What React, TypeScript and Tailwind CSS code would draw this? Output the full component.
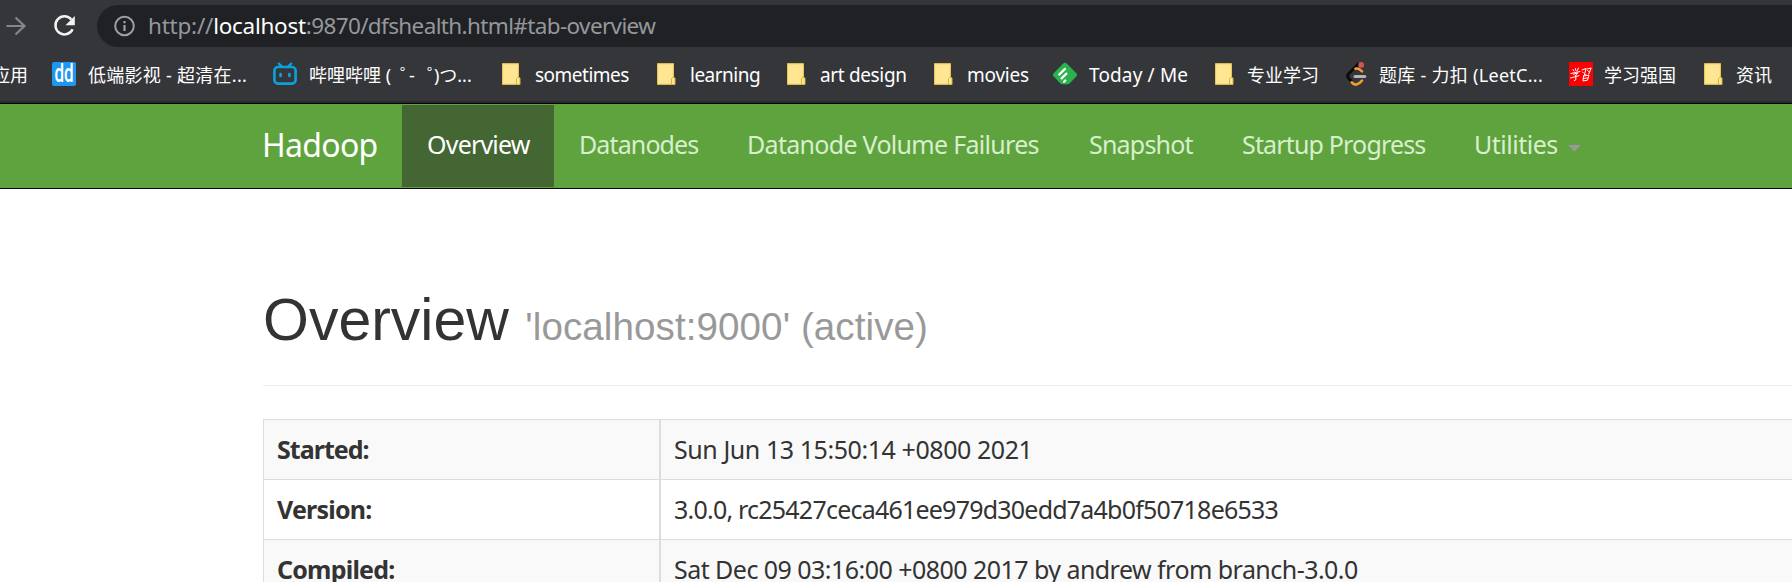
import type { ReactNode } from 'react';

const Folder = () => (
  <svg viewBox="0 0 24 24" className="h-6 w-6">
    <rect x="3" y="1" width="17" height="22" fill="#a08a3a" />
    <rect x="3.6" y="1.8" width="15.8" height="20.4" fill="#ffe693" />
    <path d="M3.6 1.8h15.8v20.4H3.6z" fill="none" stroke="#e8c95a" strokeWidth="1" />
    <path d="M17.5 22.5v-6l1.5-1.3 2 .8v6.5z" fill="#ffe693" stroke="#d9b340" strokeWidth="1" />
  </svg>
);

const Didi = () => (
  <span className="flex h-6 w-6 items-center justify-center rounded-[2px] bg-[#1e97ee] font-['Roboto',sans-serif] text-[25px] leading-6 text-white">
    <span className="scale-x-[0.68] font-medium">dd</span>
  </span>
);

const Bili = () => (
  <svg viewBox="0 0 24 24" className="h-6 w-6" fill="none" stroke="#0ba2dc" strokeWidth="2.6" strokeLinecap="round">
    <path d="M5.8 1.6 9 4.6M18.2 1.6 15 4.6" strokeWidth="2.2" />
    <rect x="1.4" y="5" width="21.2" height="16.6" rx="3.6" />
    <path d="M7.6 12v2M16.4 12v2" />
  </svg>
);

const Feedly = () => (
  <svg viewBox="0 0 24 24" className="h-6 w-6">
    <path d="M10 1.800a2.800 2.800 0 0 1 4 0l9.300 9.500a2.300 2.300 0 0 1 0 3.200L16.600 21.600a2.500 2.500 0 0 1-1.700.7H9.100a2.500 2.500 0 0 1-1.700-.7L.7 14.500a2.300 2.300 0 0 1 0-3.200z" fill="#2bb24c" />
    <path d="M6.200 12.600 12 6.900M8.600 16.400 13.400 11.600M11 19.800l1.300-1.300" stroke="#fff" strokeWidth="2.200" strokeLinecap="round" />
  </svg>
);

const Leet = () => (
  <svg viewBox="0 0 24 24" className="h-6 w-6" fill="none" strokeLinecap="round" strokeWidth="3">
    <path d="M7.500 19.200 4.600 16.200a3.200 3.200 0 0 1 0-4.400L14 2.400" stroke="#0c0c0c" />
    <path d="M11.500 6.700c2.300-.7 4.300.5 6.500 2.700M7.800 20.300c2.300 3.600 6.800 3 10.200-1.700" stroke="#f0a02f" strokeWidth="2.600" />
    <path d="M11 14.600h9.800" stroke="#b5b5b5" />
    <circle cx="17.200" cy="2.900" r="2.900" fill="#d05451" />
  </svg>
);

const Xuexi = () => (
  <svg viewBox="0 0 24 24" className="h-6 w-6">
    <rect width="24" height="24" fill="#fb0000" />
    <g fill="none" stroke="#fff" strokeWidth="1" strokeLinecap="round">
      <path d="M4 7.500 5 9M6.500 6.500l.3 2M9.500 6 8 9M2 11.500l9-2M4.500 12.300l4.500-1.500-2.500 2.700M1.500 16l8.500-2.300M6.800 13.500v4.300l-1.500.7" />
      <path d="M13 8l4-1.500-1.500 6M13.500 10l1 1M18 7l4.200-1-2.500 6M18.500 8.500l1 1M17 12.500l-2 1M14.500 14l-.5 5 4.500-.8 1.500-5-5.500.8M14.500 16.500l4.300-.6" />
    </g>
  </svg>
);

const biliLabel = (
  <>
    哔哩哔哩{' '}(
    <span className="ml-[9px] inline-block w-[9px]">゜</span>-
    <span className="ml-[12px] inline-block w-[7px]">゜</span>)つ...
  </>
);

const bookmarks: { id: string; icon: ReactNode; label: ReactNode; width: string; text: string }[] = [
  { id: 'ddys', icon: <Didi />, label: '低端影视 - 超清在...', width: 'w-[221px]', text: 'text-[18px] tracking-[0.27px]' },
  { id: 'bilibili', icon: <Bili />, label: biliLabel, width: 'w-[226px]', text: 'text-[18px]' },
  { id: 'sometimes', icon: <Folder />, label: 'sometimes', width: 'w-[155px]', text: 'text-[19px] tracking-[-0.5px]' },
  { id: 'learning', icon: <Folder />, label: 'learning', width: 'w-[130px]', text: 'text-[19px] tracking-[-0.5px]' },
  { id: 'art', icon: <Folder />, label: 'art design', width: 'w-[147px]', text: 'text-[19px] tracking-[-0.35px]' },
  { id: 'movies', icon: <Folder />, label: 'movies', width: 'w-[122px]', text: 'text-[19px] tracking-[-0.25px]' },
  { id: 'feedly', icon: <Feedly />, label: 'Today / Me', width: 'w-[159px]', text: 'text-[19px] tracking-[0.15px]' },
  { id: 'major', icon: <Folder />, label: '专业学习', width: 'w-[132px]', text: 'text-[18px] -ml-px' },
  { id: 'leetcode', icon: <Leet />, label: '题库 - 力扣 (LeetC...', width: 'w-[225px]', text: 'text-[18px] -ml-px tracking-[0.28px]' },
  { id: 'xuexi', icon: <Xuexi />, label: '学习强国', width: 'w-[132px]', text: 'text-[18px] -ml-px' },
  { id: 'news', icon: <Folder />, label: '资讯', width: 'w-[91px]', text: 'text-[18px] -ml-px' },
];

const tabs = [
  { label: 'Overview', style: 'w-[152px] bg-[#446633] text-white tracking-[-0.8px]' },
  { label: 'Datanodes', style: 'w-[168px] text-[#d8efcd] tracking-[-0.88px]' },
  { label: 'Datanode Volume Failures', style: 'w-[342px] text-[#d8efcd] tracking-[-0.7px]' },
  { label: 'Snapshot', style: 'w-[153px] text-[#d8efcd] tracking-[-0.8px]' },
  { label: 'Startup Progress', style: 'w-[232px] text-[#d8efcd] tracking-[-0.83px]' },
];

const rows = [
  { name: 'Started:', nameStyle: 'tracking-[-0.97px]', value: 'Sun Jun 13 15:50:14 +0800 2021', valueStyle: 'tracking-[-0.43px]' },
  { name: 'Version:', nameStyle: 'tracking-[-0.78px]', value: '3.0.0, rc25427ceca461ee979d30edd7a4b0f50718e6533', valueStyle: 'tracking-[-0.78px]' },
  { name: 'Compiled:', nameStyle: 'tracking-[-0.78px]', value: 'Sat Dec 09 03:16:00 +0800 2017 by andrew from branch-3.0.0', valueStyle: 'tracking-[-0.54px]' },
];

function BrowserBar() {
  return (
    <header className="h-[104px] border-b border-black bg-[#35363a]">
      <div className="flex h-[47px] items-end">
        <div className="flex h-[42px] w-[97px] shrink-0 items-center">
          <svg viewBox="0 0 24 24" className="ml-1 h-6 w-6" fill="none" stroke="#85868a" strokeWidth="2.200">
            <path d="M2.500 12H20.500M11.500 3.500 20.500 12l-9 8.500" />
          </svg>
          <svg viewBox="0 0 24 24" className="ml-6 h-6 w-6">
            <path d="M19.300 5.500A9 9 0 1 0 20.600 15.200" fill="none" stroke="#f1f3f4" strokeWidth="2.500" />
            <path d="M22.800 2v9.300h-9.300z" fill="#f1f3f4" />
          </svg>
        </div>
        <div className="flex h-[42px] flex-1 items-center rounded-l-full bg-[#202124] pl-4">
          <svg viewBox="0 0 24 24" className="h-6 w-6 shrink-0" fill="none" stroke="#9aa0a6" strokeWidth="2">
            <circle cx="11.500" cy="12" r="9.300" />
            <path d="M11.500 11v6M11.500 7v2.200" strokeWidth="2.200" />
          </svg>
          <div className="ml-[11px] whitespace-nowrap text-[22.5px] leading-[42px] text-[#94989d]">
            <span className="tracking-[-0.22px]">http://</span>
            <span className="tracking-[-0.28px] text-white">localhost</span>
            <span className="tracking-[-0.63px]">:9870/dfshealth.html#tab-overview</span>
          </div>
        </div>
      </div>
      <nav className="flex h-[54px] items-center overflow-hidden whitespace-nowrap text-[18px] text-white">
        <span className="-ml-2 w-[60px] shrink-0 pt-0.5">应用</span>
        {bookmarks.map((b) => (
          <div key={b.id} className={`flex shrink-0 items-center ${b.width}`}>
            {b.icon}
            <div className="pl-3 pt-[2px]">
              <div className={b.text}>{b.label}</div>
            </div>
          </div>
        ))}
      </nav>
      <div className="h-[2px] bg-[#292a2d]" />
    </header>
  );
}

export default function App() {
  return (
    <div className="h-[582px] w-[1792px] overflow-hidden bg-white font-['Noto_Sans','Noto_Sans_CJK_SC',sans-serif] text-[#333333]">
      <BrowserBar />
      <nav className="flex h-[85px] whitespace-nowrap border-b border-[#080808] bg-[#5fa33e] py-px pl-[262px] text-[25px] leading-[79px]">
        <a className="w-[140px] text-[32px] tracking-[-0.7px] text-white">Hadoop</a>
        {tabs.map((t) => (
          <a key={t.label} className={`pl-[25px] ${t.style}`}>{t.label}</a>
        ))}
        <a className="flex pl-[25px] text-[#d8efcd]">
          <span className="tracking-[-0.5px]">Utilities</span>
          <svg viewBox="0 0 13 7" className="ml-[10px] mt-10 h-[7px] w-[13px]">
            <path d="M0 0h13L6.500 6.500z" fill="#999999" />
          </svg>
        </a>
      </nav>
      <main className="ml-[263px] pt-[93px]">
        <div className="h-[104px] border-b border-[#eeeeee]">
          <h1 className="whitespace-nowrap font-['Liberation_Sans',Arial,sans-serif] text-[59px] leading-[76px]">
            Overview <small className="text-[38.6px] tracking-[0.08px] text-[#999999]">'localhost:9000' (active)</small>
          </h1>
        </div>
        <div className="mt-[33px] border-l border-t border-[#dddddd] text-[25px]">
          {rows.map((r, i) => (
            <div key={r.name} className={`flex h-[60px] whitespace-nowrap border-b border-[#dddddd] leading-[59px] ${i % 2 === 0 ? 'bg-[#f9f9f9]' : ''}`}>
              <div className={`w-[397px] border-r-2 border-[#dddddd] pl-[13px] font-bold ${r.nameStyle}`}>{r.name}</div>
              <div className={`pl-[13px] ${r.valueStyle}`}>{r.value}</div>
            </div>
          ))}
        </div>
      </main>
    </div>
  );
}
